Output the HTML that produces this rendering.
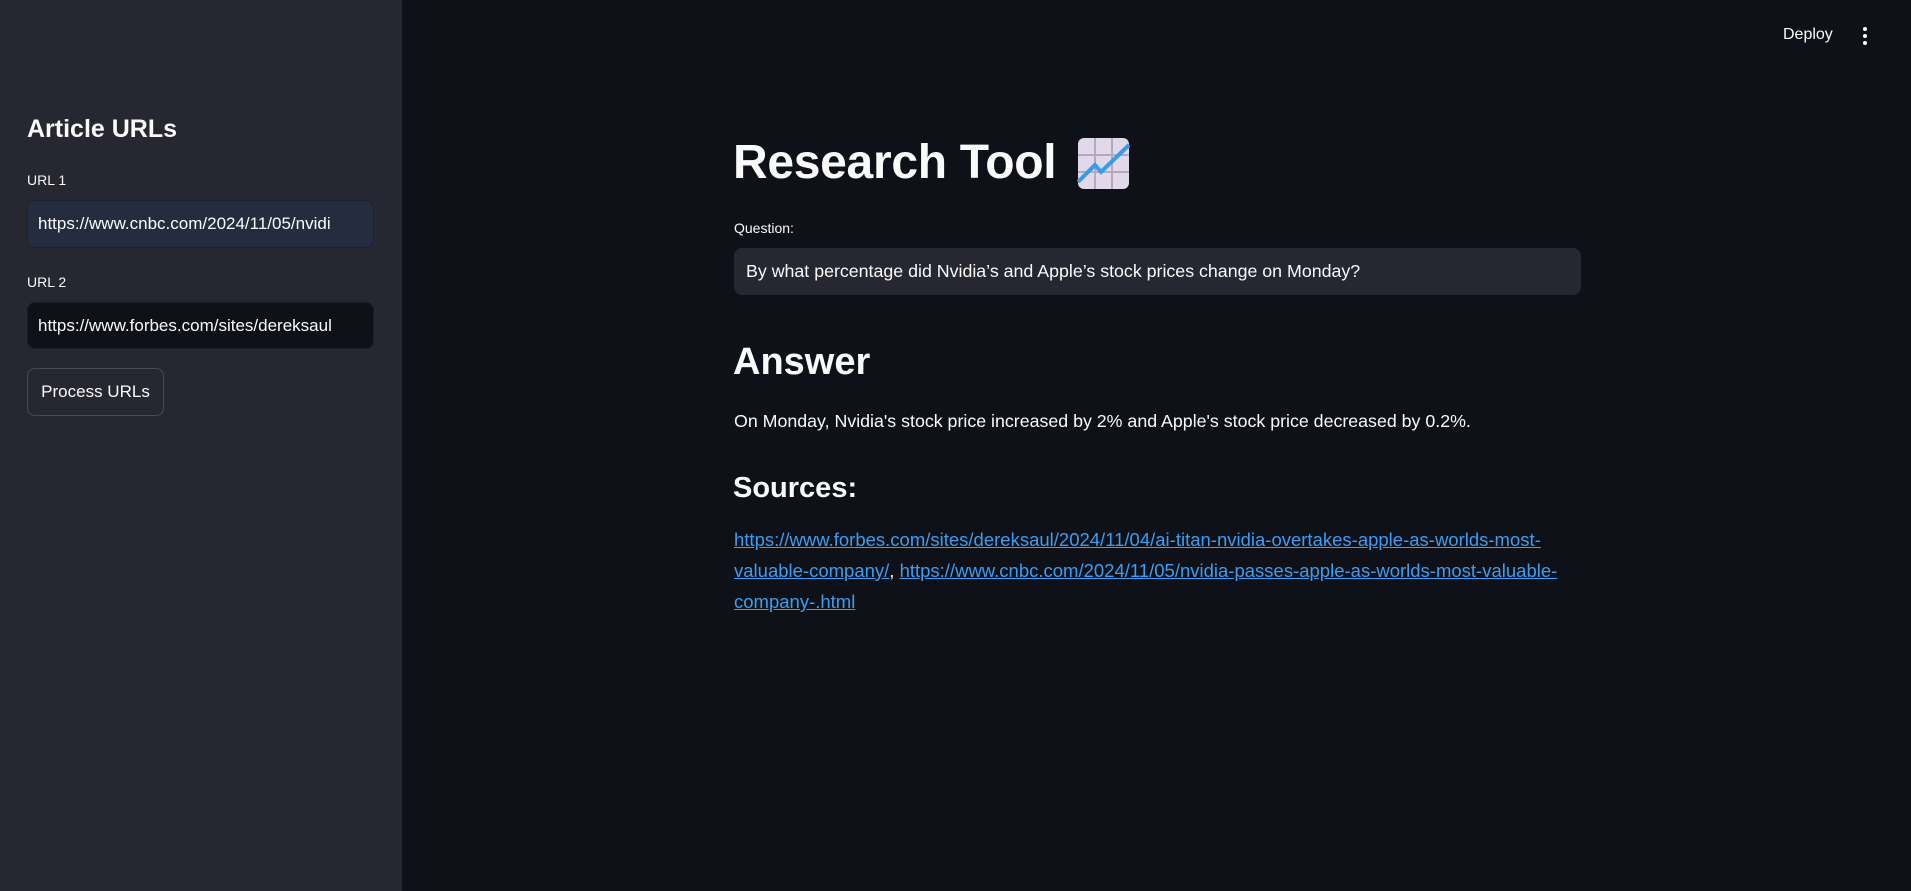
<!DOCTYPE html>
<html><head><meta charset="utf-8"><style>
*{box-sizing:border-box;margin:0;padding:0}
body{width:1911px;height:891px;background:#0e1117;color:#fafafa;font-family:"Liberation Sans",sans-serif;position:relative;overflow:hidden}
.side{position:absolute;left:0;top:0;width:402px;height:891px;background:#262730}
.abs{position:absolute;white-space:nowrap}
.inp{position:absolute;border-radius:8px;border:1px solid #262730;padding-left:10px;font-size:17px;display:flex;align-items:center;overflow:hidden;white-space:nowrap}
a{color:#3d9df3;text-decoration:underline}
</style></head><body>
<div class="side">
<div class="abs" style="left:27px;top:115px;font-size:25px;font-weight:bold">Article URLs</div>
<div class="abs" style="left:27px;top:172px;font-size:14px">URL 1</div>
<div class="inp" style="left:27px;top:200px;width:347px;height:48px;background:#252c3f;border-color:#1e2230">https://www.cnbc.com/2024/11/05/nvidi</div>
<div class="abs" style="left:27px;top:274px;font-size:14px">URL 2</div>
<div class="inp" style="left:27px;top:302px;width:347px;height:47px;background:#0e1117;border-color:#1a1c23">https://www.forbes.com/sites/dereksaul</div>
<div class="inp" style="left:27px;top:368px;width:137px;height:48px;background:#262730;border-color:#4a4c55;justify-content:center;padding:0">Process URLs</div>
</div>
<div class="abs" style="left:1783px;top:26px;font-size:16px">Deploy</div>
<svg class="abs" style="left:1860px;top:25px" width="10" height="22"><circle cx="5" cy="4" r="2" fill="#fafafa"/><circle cx="5" cy="11" r="2" fill="#fafafa"/><circle cx="5" cy="18" r="2" fill="#fafafa"/></svg>
<div class="abs" style="left:733px;top:135px;font-size:48px;font-weight:bold;letter-spacing:-0.3px">Research Tool</div>
<svg class="abs" style="left:1077px;top:137px" width="53" height="53" viewBox="0 0 53 53"><rect x="1" y="1" width="51" height="51" rx="6" fill="#e1d8ea"/><g stroke="#b5a9bd" stroke-width="2"><line x1="18" y1="1" x2="18" y2="52"/><line x1="35" y1="1" x2="35" y2="52"/><line x1="1" y1="18" x2="52" y2="18"/><line x1="1" y1="35" x2="52" y2="35"/></g><polyline points="1,45 18,28 24,35 52,8" fill="none" stroke="#3a9be8" stroke-width="4"/></svg>
<div class="abs" style="left:734px;top:220px;font-size:14px">Question:</div>
<div class="inp" style="left:734px;top:248px;width:847px;height:47px;background:#262730;padding-left:11px;font-size:17.8px">By what percentage did Nvidia’s and Apple’s stock prices change on Monday?</div>
<div class="abs" style="left:733px;top:341px;font-size:38px;font-weight:bold">Answer</div>
<div class="abs" style="left:734px;top:411px;font-size:17.8px">On Monday, Nvidia's stock price increased by 2% and Apple's stock price decreased by 0.2%.</div>
<div class="abs" style="left:733px;top:472px;font-size:29px;font-weight:bold">Sources:</div>
<div class="abs" style="left:734px;top:524px;font-size:18.5px;line-height:31px"><a>https://www.forbes.com/sites/dereksaul/2024/11/04/ai-titan-nvidia-overtakes-apple-as-worlds-most-</a><br><a>valuable-company/</a>, <a>https://www.cnbc.com/2024/11/05/nvidia-passes-apple-as-worlds-most-valuable-</a><br><a>company-.html</a></div>
</body></html>
